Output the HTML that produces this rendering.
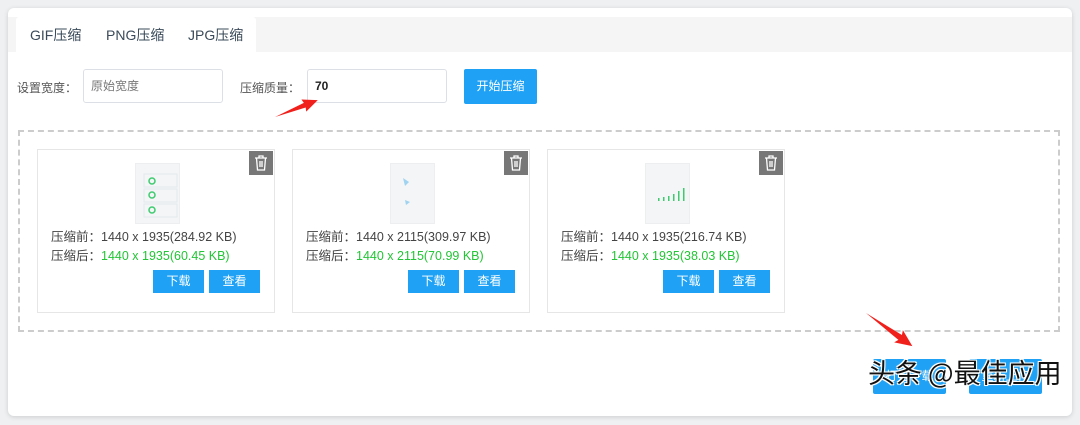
<!DOCTYPE html>
<html><head><meta charset="utf-8"><style>
*{box-sizing:border-box;margin:0;padding:0}
body{width:1080px;height:425px;background:#eef0f2;font-family:"Liberation Sans","Noto Sans CJK SC",sans-serif;position:relative;overflow:hidden}
.card{position:absolute;left:8px;top:8px;width:1064px;height:408px;background:#fff;border-radius:6px;box-shadow:0 1px 5px rgba(0,0,0,.15)}
.tabbar{position:absolute;left:8px;top:17px;width:1064px;height:35px;background:#f5f5f5}
.tabact{position:absolute;left:16px;top:17px;width:240px;height:35px;background:#fff;border-radius:3px 3px 0 0}
.tab{position:absolute;top:25px;font-size:14px;color:#3a4a5a}
.lbl{position:absolute;font-size:12px;color:#555}
.inp{position:absolute;height:34px;border:1px solid #dcdfe6;border-radius:3px;background:#fff;font-size:12px;padding-left:7px;line-height:32px}
.btn{position:absolute;background:#1fa2f5;color:#fff;font-size:12px;text-align:center;border-radius:2px}
.dash{position:absolute;left:18px;top:130px;width:1042px;height:202px;border:2px dashed #ccc}
.ic{position:absolute;top:149px;width:238px;height:164px;border:1px solid #e6e6e6;background:#fff}
.thumb{position:absolute;left:97px;top:13px;width:45px;height:61px;background:#f3f5f7;border:1px solid #eceef0}
.trash{position:absolute;right:1px;top:1px;width:24px;height:24px;background:#777}
.t1,.t2{position:absolute;left:13px;font-size:12.5px;color:#444;white-space:nowrap}
.t1{top:76px}.t2{top:95px}
.g{color:#22c535}
.b1,.b2{position:absolute;top:120px;width:51px;height:23px;line-height:23px;background:#1fa2f5;color:#fff;font-size:12px;text-align:center}
.b1{left:115px}.b2{left:171px}
.wm{position:absolute;left:868px;top:352px;font-size:27px;color:#111;font-family:"Noto Sans CJK SC",sans-serif;text-shadow:-1px -1px 0 #fff,1px -1px 0 #fff,-1px 1px 0 #fff,1px 1px 0 #fff,0 0 2px #fff}
</style></head><body>
<div class="card"></div>
<div class="tabbar"></div><div class="tabact"></div>
<div class="tab" style="left:30px">GIF压缩</div>
<div class="tab" style="left:106px">PNG压缩</div>
<div class="tab" style="left:188px">JPG压缩</div>
<div class="lbl" style="left:17px;top:79px">设置宽度：</div>
<div class="inp" style="left:83px;top:69px;width:140px;color:#777">原始宽度</div>
<div class="lbl" style="left:240px;top:79px">压缩质量：</div>
<div class="inp" style="left:307px;top:69px;width:140px;color:#222;font-weight:bold">70</div>
<div class="btn" style="left:464px;top:69px;width:73px;height:35px;line-height:35px">开始压缩</div>
<div class="dash"></div>
<div class="ic" style="left:37px"><div class="thumb"><svg width="45" height="61"><g fill="none" stroke="#3dcb6e" stroke-width="1.5"><circle cx="16" cy="17" r="3"/><circle cx="16" cy="31" r="3"/><circle cx="16" cy="46" r="3"/></g><g stroke="#e6e9ec"><rect x="8" y="10" width="33" height="13" fill="none"/><rect x="8" y="25" width="33" height="13" fill="none"/><rect x="8" y="40" width="33" height="13" fill="none"/></g></svg></div><div class="trash"><svg width="24" height="24"><g fill="none" stroke="#fff" stroke-width="1.3"><path d="M6 7h12M10 7V5h4v2M7.5 7l1 12h7l1-12M11 10v6M13 10v6"/></g></svg></div>
<div class="t1">压缩前：1440 x 1935(284.92 KB)</div><div class="t2">压缩后：<span class="g">1440 x 1935(60.45 KB)</span></div><div class="b1">下载</div><div class="b2">查看</div></div>
<div class="ic" style="left:292px"><div class="thumb"><svg width="45" height="61"><g fill="#9fd3f0"><path d="M12 14l6 4-4 4z"/><path d="M14 36l5 2-4 3z"/></g></svg></div><div class="trash"><svg width="24" height="24"><g fill="none" stroke="#fff" stroke-width="1.3"><path d="M6 7h12M10 7V5h4v2M7.5 7l1 12h7l1-12M11 10v6M13 10v6"/></g></svg></div>
<div class="t1">压缩前：1440 x 2115(309.97 KB)</div><div class="t2">压缩后：<span class="g">1440 x 2115(70.99 KB)</span></div><div class="b1">下载</div><div class="b2">查看</div></div>
<div class="ic" style="left:547px"><div class="thumb"><svg width="45" height="61"><g fill="#3dcb6e"><rect x="12" y="34" width="1.5" height="3"/><rect x="17" y="33" width="1.5" height="4"/><rect x="22" y="32" width="1.5" height="5"/><rect x="27" y="30" width="1.5" height="7"/><rect x="32" y="27" width="1.5" height="10"/><rect x="37" y="24" width="1.5" height="13"/></g></svg></div><div class="trash"><svg width="24" height="24"><g fill="none" stroke="#fff" stroke-width="1.3"><path d="M6 7h12M10 7V5h4v2M7.5 7l1 12h7l1-12M11 10v6M13 10v6"/></g></svg></div>
<div class="t1">压缩前：1440 x 1935(216.74 KB)</div><div class="t2">压缩后：<span class="g">1440 x 1935(38.03 KB)</span></div><div class="b1">下载</div><div class="b2">查看</div></div>
<div class="btn" style="left:873px;top:359px;width:73px;height:35px;line-height:35px">打包下载</div>
<div class="btn" style="left:969px;top:359px;width:73px;height:35px;line-height:35px">重新上传</div>
<svg style="position:absolute;left:0;top:0" width="1080" height="425"><g fill="#f0211c">
<polygon transform="translate(275,117) rotate(-21.6)" points="0,0 32,-2.5 31,-6.5 46,0 31,6.5 32,2.5"/>
<polygon transform="translate(866,313) rotate(35.6)" points="0,0 42,-3 40,-7.5 57,0 40,7.5 42,3"/>
</g></svg>
<div class="wm">头条 @最佳应用</div>
</body></html>
